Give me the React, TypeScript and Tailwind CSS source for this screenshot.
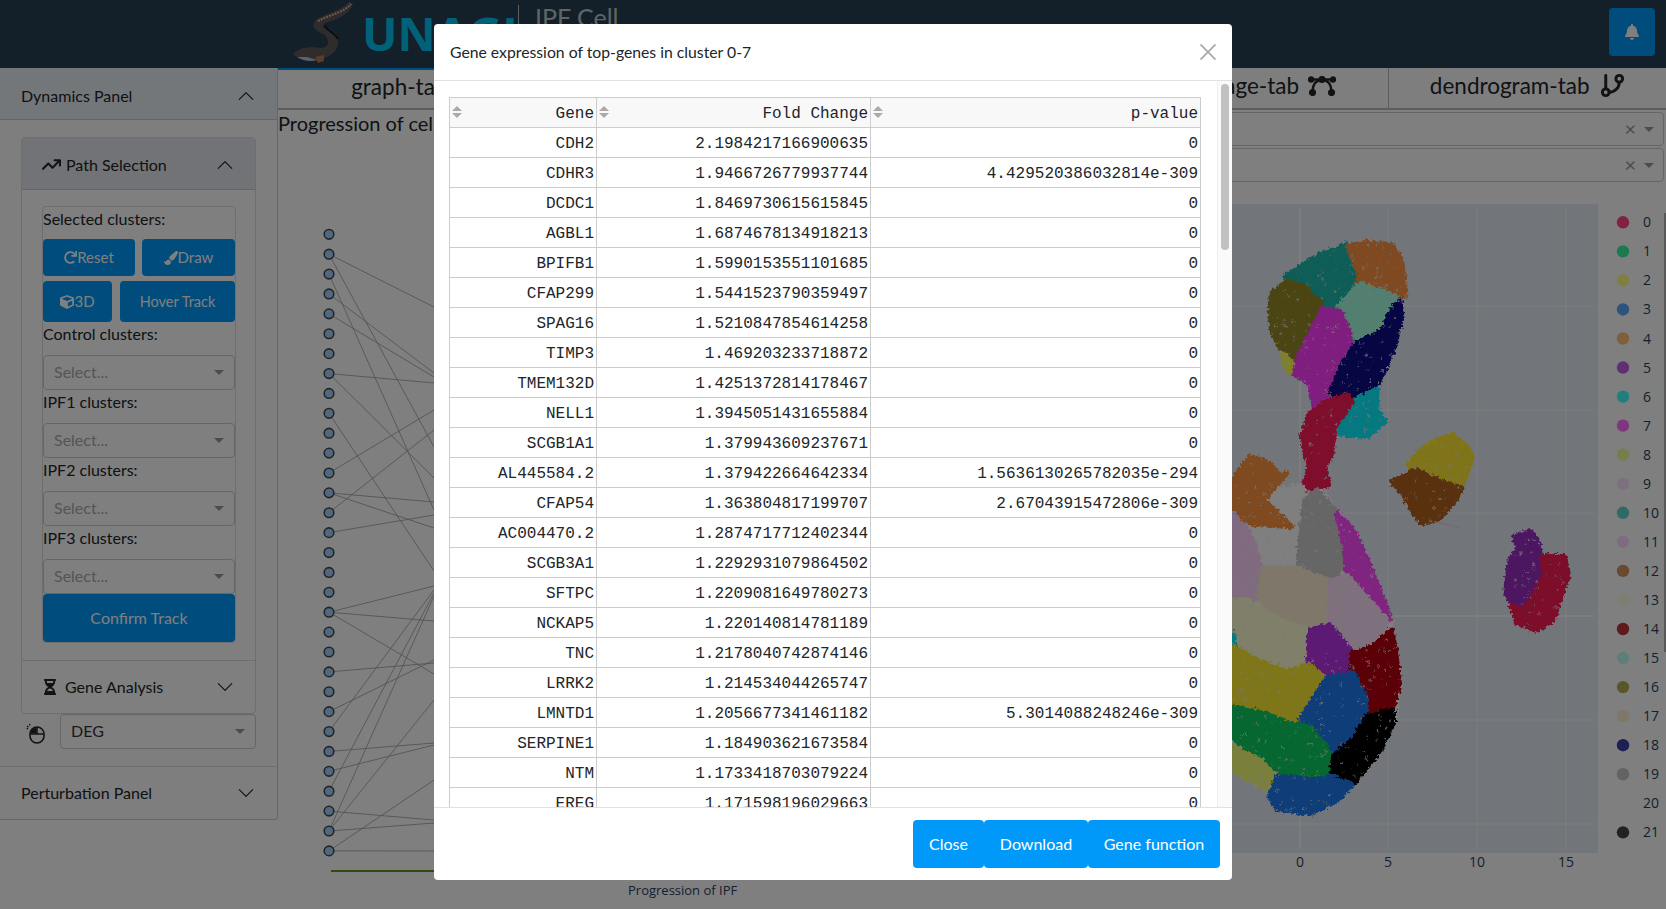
import { BsChevronDown, BsChevronUp } from "react-icons/bs";
import { FaBell, FaCube, FaHourglassHalf, FaPaintBrush, FaProjectDiagram, FaRedo } from "react-icons/fa";
import { FaArrowTrendUp } from "react-icons/fa6";
import { GitBranch } from "lucide-react";

const rows = [
	["CDH2", "2.1984217166900635", "0"],
	["CDHR3", "1.9466726779937744", "4.429520386032814e-309"],
	["DCDC1", "1.8469730615615845", "0"],
	["AGBL1", "1.6874678134918213", "0"],
	["BPIFB1", "1.5990153551101685", "0"],
	["CFAP299", "1.5441523790359497", "0"],
	["SPAG16", "1.5210847854614258", "0"],
	["TIMP3", "1.469203233718872", "0"],
	["TMEM132D", "1.4251372814178467", "0"],
	["NELL1", "1.3945051431655884", "0"],
	["SCGB1A1", "1.379943609237671", "0"],
	["AL445584.2", "1.379422664642334", "1.5636130265782035e-294"],
	["CFAP54", "1.363804817199707", "2.67043915472806e-309"],
	["AC004470.2", "1.2874717712402344", "0"],
	["SCGB3A1", "1.2292931079864502", "0"],
	["SFTPC", "1.2209081649780273", "0"],
	["NCKAP5", "1.220140814781189", "0"],
	["TNC", "1.2178040742874146", "0"],
	["LRRK2", "1.214534044265747", "0"],
	["LMNTD1", "1.2056677341461182", "5.3014088248246e-309"],
	["SERPINE1", "1.184903621673584", "0"],
	["NTM", "1.1733418703079224", "0"],
	["EREG", "1.171598196029663", "0"],
];

// the whole page sits under a 50% backdrop, so colours read off the picture get doubled
const x2 = (hex: string) => {
	const n = parseInt(hex.slice(1), 16);
	const c = [(n >> 16) & 255, (n >> 8) & 255, n & 255].map((v) => Math.min(255, v * 2));
	return `rgb(${c[0]},${c[1]},${c[2]})`;
};

const legend = [
	"#8f2340", "#1e7a4e", "#8d8340", "#2f5388", "#96603a", "#5e2f72", "#1f8794", "#8a3585",
	"#76904b", "#96707d", "#2f6a64", "#7f6c8e", "#6a4a2e", "#8a8a70", "#5e1a1f", "#5e9078",
	"#5a562a", "#8f7868", "#1c2052", "#636363", "", "#222222",
];

// cluster outlines, traced in 3x units from x=1220
const clusters: [string, number[]][] = [
	["#808080", [37,1500,230,1460,300,1465,345,1530,510,1855,535,2060,520,2170,395,2355,270,2440,37,2310]],
	["#0f5e57", [195,830,250,795,300,765,380,735,395,760,418,820,400,860,355,920,320,930,300,900,250,860]],
	["#8c4a22", [385,738,440,728,515,735,545,780,555,890,530,890,415,850,418,820,395,770]],
	["#4a4514", [155,880,200,845,250,860,305,910,270,1000,240,1060,210,1085,180,1040,155,990,150,930]],
	["#528770", [420,850,530,890,505,950,490,990,400,1035,375,960,355,920]],
	["#8a1f7e", [310,925,360,935,390,1000,395,1040,375,1080,335,1160,320,1195,285,1230,270,1150,220,1120,240,1060,270,1000]],
	["#05788c", [470,1150,470,1230,495,1262,440,1310,360,1300,365,1240,380,1190]],
	["#050545", [540,905,545,950,525,1030,490,1120,470,1150,390,1190,330,1180,350,1130,375,1080,410,1030,490,990,515,930]],
	["#8f0f2d", [380,1185,395,1205,345,1280,335,1360,315,1400,325,1455,245,1470,270,1400,255,1350,245,1310,270,1240,330,1200]],
	["#8a8a30", [190,1060,215,1085,210,1115,195,1100]],
	["#92741a", [610,1345,650,1320,700,1305,745,1345,755,1375,725,1465,640,1440,570,1410,565,1395]],
	["#5a320f", [515,1445,590,1410,640,1435,725,1465,700,1510,650,1560,605,1570,570,1520,550,1480]],
	["#8a8a8a", [60,1550,170,1470,250,1460,245,1620,235,1700,130,1700,100,1620]],
	["#8a4a20", [37,1440,90,1370,150,1390,180,1430,200,1420,130,1500,215,1580,100,1570,37,1550]],
	["#666666", [290,1470,345,1530,380,1680,330,1745,235,1700,245,1580,255,1500]],
	["#8a2585", [350,1540,400,1590,450,1700,510,1855,430,1790,380,1730,375,1640]],
	["#8a6a9a", [37,1540,90,1600,130,1720,115,1790,37,1820]],
	["#96786a", [130,1705,235,1705,330,1745,330,1860,260,1890,180,1860,115,1790]],
	["#96707d", [330,1745,380,1725,500,1860,490,1900,400,1950,370,1920,330,1880]],
	["#8a8a6a", [37,1800,80,1800,180,1860,265,1890,270,1990,200,2015,120,1980,37,1950]],
	["#5d1a75", [270,1890,330,1875,390,1950,395,2020,360,2035,290,2030,265,1990]],
	["#05788c", [37,1900,50,1960,37,1975]],
	["#5a0008", [460,1940,515,1890,530,1980,535,2060,520,2120,480,2165,440,2150,425,2060,395,2020,395,1960]],
	["#94761a", [37,1940,120,1985,200,2015,265,1995,320,2035,250,2150,205,2170,130,2130,37,2110]],
	["#0f3d78", [320,2035,400,2020,440,2100,435,2160,400,2230,350,2270,240,2160]],
	["#056830", [37,2120,130,2140,205,2170,270,2180,320,2240,345,2330,290,2340,165,2330,120,2280,37,2210]],
	["#000000", [440,2150,520,2130,520,2170,480,2250,400,2350,335,2330,340,2270,400,2220]],
	["#7a9a3c", [37,2240,120,2280,170,2330,170,2380,130,2360,37,2310]],
	["#0f3d78", [170,2330,290,2340,335,2330,395,2355,350,2400,270,2440,170,2425,150,2390]],
	["#4c1760", [885,1610,930,1595,950,1620,960,1660,975,1720,915,1830,875,1815,858,1770,870,1680,895,1650]],
	["#7d0e2a", [965,1670,1035,1670,1042,1730,1000,1860,950,1890,890,1870,875,1815,915,1830,975,1720]],
];

const inside = (p: number[], x: number, y: number) => {
	let hit = false;
	for (let i = 0, j = p.length - 2; i < p.length; j = i, i += 2) {
		if (p[i + 1] > y !== p[j + 1] > y && x < ((p[j] - p[i]) * (y - p[i + 1])) / (p[j + 1] - p[i + 1]) + p[i]) hit = !hit;
	}
	return hit;
};

// gray flecks where the scatter leaves gaps
const flecks: [number, number][] = [];
let seed = 17;
const rnd = () => {
	seed = (seed * 16807) % 2147483647;
	return seed / 2147483647;
};
clusters.slice(1).forEach(([, p]) => {
	for (let k = 0; k < 2000; k++) {
		const x = 37 + rnd() * 1010;
		const y = 720 + rnd() * 1730;
		if (inside(p, x, y)) flecks.push([x, y]);
	}
});

const nodes = Array.from({ length: 32 }, (_, i) => 234.3 + i * 19.89);
const edges = [
	[1,307],[1,447],[2,510],[3,373],[4,377],[7,383],[7,478],[9,571],[12,410],[13,502],[13,528],[14,430],[15,515],
	[19,586],[19,621],[19,674],[22,663],[24,660],[25,590],[26,743],[27,745],[28,593],[29,820],[30,823],[30,596],[30,700],[31,780],[31,851],
];

const ClusterSelect = ({ label }: { label: string }) => (
	<>
		<div className="h-[33px] leading-[24px] text-[#212529]">{label}</div>
		<SelectBox text="Select..." muted />
	</>
);

const SelectBox = ({ text, muted, className = "" }: { text: string; muted?: boolean; className?: string }) => (
	<div className={`flex h-[35px] items-center justify-between rounded border border-[#ccc] bg-white pb-[2px] pl-[10px] pr-[10px] ${className}`}>
		<span className={muted ? "text-[#aaa]" : "text-[#333]"}>{text}</span>
		<span className="mt-[2px] h-0 w-0 border-x-[5px] border-t-[5px] border-x-transparent border-t-[#999]" />
	</div>
);

const Blue = ({ children, className = "" }: { children: React.ReactNode; className?: string }) => (
	<button className={`flex items-center justify-center rounded bg-[#0099fa] text-white ${className}`}>{children}</button>
);

const Tab = ({ label, icon, active, divider, className = "" }: { label?: string; icon?: React.ReactNode; active?: boolean; divider?: boolean; className?: string }) => (
	<div className={`flex items-center justify-center gap-[9px] pb-[5px] text-[22.5px] text-[#212529] ${active ? "border-t-2 border-[#0099fa]" : ""} ${divider ? "border-l border-[#bbb]" : ""} ${className}`}>
		{label}
		{icon}
	</div>
);

const TopFilter = () => (
	<div className="flex h-[34px] items-center justify-end gap-[8px] rounded border border-[#ccc] bg-white pr-[9px]">
		<span className="-mt-[2px] text-[20px] leading-none text-[#999]">×</span>
		<span className="h-0 w-0 border-x-[5px] border-t-[5px] border-x-transparent border-t-[#999]" />
	</div>
);

const BezierIcon = () => (
	<svg width="28" height="20" viewBox="0 0 28 20" fill="none" stroke="#212529" strokeWidth="2.4">
		<path d="M2 3.5 H26" />
		<path d="M14 3.5 C8 4 5 9 4.5 15 M14 3.5 C20 4 23 9 23.5 15" />
		<circle cx="3" cy="3.5" r="2" fill="#212529" />
		<circle cx="25" cy="3.5" r="2" fill="#212529" />
		<circle cx="14" cy="3.5" r="2.4" fill="#212529" />
		<circle cx="4.5" cy="16.5" r="2.4" fill="#212529" />
		<circle cx="23.5" cy="16.5" r="2.4" fill="#212529" />
	</svg>
);

const EelLogo = () => (
	<svg width="62" height="62" viewBox="0 0 62 62" className="mt-[1px] shrink-0">
		<path d="M0 53 C8 45 20 46 28 47 C36 46 37 40 32 34 C24 30 16 26 24 18 C34 12 48 10 56 1 L60 3 C56 14 44 18 32 22 C28 25 30 27 38 30 C48 36 48 48 36 55 C26 60 10 62 0 53 Z" fill="#5e585c" />
		<path d="M25 20 C36 14 50 12 58 3" fill="none" stroke="#d8b488" strokeWidth="2" strokeDasharray="2 1" />
		<path d="M33 24 C30 28 40 30 45 38" fill="none" stroke="#1c1a1c" strokeWidth="2" />
		<path d="M4 56 C10 60 18 61 24 59 L14 56 Z" fill="#b8c4cc" />
		<path d="M22 56 L31 54 L31 60 L25 62 Z" fill="#b87848" />
	</svg>
);

const App = () => {
	return (
		<div className="relative h-[909px] w-full overflow-hidden bg-white font-['Lato',sans-serif] text-base">
			{/* header */}
			<div className="flex h-[68px] items-start justify-between bg-[#264054] pl-[293px] pr-[11px]">
				<div className="flex items-start">
					<EelLogo />
					<span className="ml-[7px] mt-[4px] w-[156px] font-['Open_Sans',sans-serif] text-[47px] leading-[58px] font-bold text-[#00c4f0]">UNAGI</span>
					<div className="mt-[5px] flex h-5 border-l border-[#bbb] pl-[16px] text-[25px] leading-[24px] text-[#c0c8cc]">IPF Cell</div>
				</div>
				<button className="mt-2 flex h-12 w-[46px] items-center justify-center rounded bg-[#0099fa] text-white">
					<FaBell size={16} />
				</button>
			</div>

			<div className="flex">
				{/* side panel */}
				<div className="h-[750px] w-[278px] shrink-0">
					<div className="rounded-br border-r border-b border-[#ccc] bg-[#fcfcfc] text-[#212529]">
						<div className="flex h-[52px] items-center justify-between border-b border-[#ccc] bg-[#e9eef4] pl-[21px] pr-[22px] pt-[4px]">
							<span>Dynamics Panel</span>
							<BsChevronUp size={18} />
						</div>
						<div className="px-[21px] pt-[17px]">
							<div className="rounded border border-[#ddd] bg-white">
								<div className="flex h-[52px] items-center justify-between border-b border-[#ccc] bg-[#e3e7ec] pl-5 pr-[21px] pt-[2px]">
									<span className="flex items-center gap-[5px]">
										<FaArrowTrendUp size={19} />
										Path Selection
									</span>
									<BsChevronUp size={18} />
								</div>
								<div className="pb-[17px] pl-[20px] pr-[19px] pt-[16px]">
									<div className="rounded border border-[#ddd] text-[#212529]">
										<div className="h-[32px] leading-[24px]">Selected clusters:</div>
										<div className="flex gap-[7px]">
											<Blue className="h-[37px] w-[92px] text-[15px]"><FaRedo size={13} />Reset</Blue>
											<Blue className="h-[37px] w-[93px] text-[15px]"><FaPaintBrush size={14} />Draw</Blue>
										</div>
										<div className="mt-[5px] flex gap-2">
											<Blue className="h-[41px] w-[69px] text-[15px]"><FaCube size={14} />3D</Blue>
											<Blue className="h-[41px] w-[115px] text-[14.5px]">Hover Track</Blue>
										</div>
										<ClusterSelect label="Control clusters:" />
										<ClusterSelect label="IPF1 clusters:" />
										<ClusterSelect label="IPF2 clusters:" />
										<ClusterSelect label="IPF3 clusters:" />
										<Blue className="h-[48px] w-full text-base">Confirm Track</Blue>
									</div>
								</div>
								<div className="flex h-[53px] items-center justify-between border-t border-[#ddd] pl-5 pr-[21px]">
									<span className="flex items-center gap-[7px]">
										<FaHourglassHalf size={16} />
										Gene Analysis
									</span>
									<BsChevronDown size={18} />
								</div>
							</div>
							<div className="flex items-center pb-[17px]">
								<svg width="20" height="21" viewBox="0 0 20 21" className="ml-[5px] mr-[14px] mt-[3px]" fill="none" stroke="#212529" strokeWidth="1.6">
									<rect x="4" y="4" width="14" height="16" rx="7" />
									<path d="M4 11 H18 M11 4 V11" />
									<path d="M4.6 10.4 V9 A6.4 6.4 0 0 1 10.4 4.6 V10.4 Z" fill="#212529" stroke="none" />
									<path d="M1 3 L2.4 4.2 M3.4 1 L4.2 2.6 M0.6 5.6 H2.2" strokeWidth="1.2" />
								</svg>
								<SelectBox text="DEG" className="flex-1" />
							</div>
						</div>
						<div className="flex h-[53px] items-center justify-between border-t border-[#ddd] pl-[21px] pr-[22px]">
							<span>Perturbation Panel</span>
							<BsChevronDown size={18} />
						</div>
					</div>
				</div>

				{/* tabs and plots */}
				<div className="flex min-w-0 flex-1 flex-col">
					<div className="grid h-[42px] grid-cols-5 border-b-2 border-[#bbb] bg-[#fcfcfc]">
						<Tab label="graph-tab" icon={<FaProjectDiagram size={26} />} active />
						<Tab />
						<Tab />
						<Tab label="lineage-tab" icon={<BezierIcon />} className="pl-[26px]" />
						<Tab label="dendrogram-tab" icon={<GitBranch size={27} strokeWidth={2.6} />} divider />
					</div>
					<div className="flex">
						<div className="w-[650px] shrink-0">
							<div className="h-[30px] text-[20px] leading-[26px] text-[#212529]">Progression of cell</div>
							<svg width="650" height="769" viewBox="278 140 650 769" className="block">
								{edges.map(([i, y]) => (
									<line key={`${i}-${y}`} x1={329} y1={nodes[i]} x2={434} y2={y} stroke="#a8a8a8" strokeWidth="0.9" />
								))}
								{nodes.map((y) => (
									<circle key={y} cx={329} cy={y} r={4.8} fill="#a2d0ff" stroke="#444a50" strokeWidth="1.6" />
								))}
								<line x1={331} y1={871} x2={434} y2={871} stroke="#5a9a20" strokeWidth="2" />
								<text x={628} y={895} fontSize="13" fontFamily="Open Sans, sans-serif" fill="#2a3f5f">Progression of IPF</text>
							</svg>
						</div>
						<div className="min-w-0 flex-1">
							<div className="flex flex-col gap-[2px] pr-[2px] pt-[2px]">
								<TopFilter />
								<TopFilter />
							</div>
							<svg width="738" height="705" viewBox="928 204 738 705" className="mt-[22px] block">
								<defs>
									<filter id="rough" x="1220" y="200" width="446" height="700" filterUnits="userSpaceOnUse" primitiveUnits="userSpaceOnUse">
										<feTurbulence type="fractalNoise" baseFrequency="0.35" numOctaves="2" seed="4" result="n" />
										<feDisplacementMap in="SourceGraphic" in2="n" scale="7" xChannelSelector="R" yChannelSelector="G" />
									</filter>
								</defs>
								<rect x={928} y={204} width={670} height={649} fill="#e5ecf6" />
								{[1300, 1388, 1477, 1566].map((x) => (
									<line key={x} x1={x} y1={208} x2={x} y2={849} stroke="#fff" strokeWidth={x === 1300 ? 2 : 1} opacity="0.7" />
								))}
								{[306, 410, 513, 616, 720, 824].map((y) => (
									<line key={y} x1={928} y1={y} x2={1594} y2={y} stroke="#fff" strokeWidth={y === 616 ? 2 : 1} opacity="0.7" />
								))}
								<g filter="url(#rough)">
									<g transform="translate(1220 0) scale(0.33333)">
										{clusters.map(([c, p], i) => (
											<polygon key={i} points={p.join(" ")} fill={x2(c)} stroke={x2(c)} strokeWidth="16" strokeLinejoin="round" />
										))}
										<line x1={650} y1={1565} x2={720} y2={1585} stroke={x2("#8a6070")} strokeWidth="4" />
										{flecks.map(([x, y], i) => (
											<rect key={i} x={x} y={y} width={3 + (i % 3) * 2} height={3 + (i % 2) * 3} fill="#f0f0f0" opacity="0.7" />
										))}
									</g>
								</g>
								{[["0", 1300], ["5", 1388], ["10", 1477], ["15", 1566]].map(([t, x]) => (
									<text key={t} x={x} y={867} textAnchor="middle" fontSize="14" fontFamily="Open Sans, sans-serif" fill="#2a3f5f">{t}</text>
								))}
								{legend.map((c, i) => (
									<g key={i}>
										{c && <circle cx={1623} cy={222.3 + i * 29.05} r={6.2} fill={x2(c)} />}
										<text x={1643} y={227.3 + i * 29.05} fontSize="14" fontFamily="Open Sans, sans-serif" fill="#2a3f5f">{i}</text>
									</g>
								))}
								<line x1={1665} y1={213} x2={1665} y2={652} stroke="#999" strokeWidth="1.5" />
							</svg>
						</div>
					</div>
				</div>
			</div>

			{/* modal */}
			<div className="absolute inset-0 bg-black/50 pt-6">
				<div className="mx-auto flex h-[856px] w-[798px] flex-col overflow-hidden rounded bg-white">
					<div className="flex h-[57px] shrink-0 items-center justify-between border-b border-[#dee2e6] pl-[16px] pr-[16px]">
						<span className="text-[15.75px] text-[#212529]">Gene expression of top-genes in cluster 0-7</span>
						<svg width="16" height="16" viewBox="0 0 16 16" stroke="#aaa" strokeWidth="1.8">
							<path d="M0.5 0.5 L15.5 15.5 M15.5 0.5 L0.5 15.5" />
						</svg>
					</div>
					<div className="flex min-h-0 flex-1">
						<div className="min-w-0 flex-1 overflow-hidden pl-[15px] pt-[16px]">
							<table className="w-[751px] table-fixed border-collapse font-['Liberation_Mono',monospace] text-base text-[#212529]">
								<colgroup>
									<col className="w-[147px]" />
									<col className="w-[274px]" />
									<col className="w-[330px]" />
								</colgroup>
								<thead>
									<tr className="h-[30px] bg-[#f8f8f8]">
										{["Gene", "Fold Change", "p-value"].map((h) => (
											<th key={h} className="border border-[#ccc] pl-[2px] pr-[2px] pt-[2px] font-normal">
												<div className="flex items-center justify-between">
													<span className="-mt-1 flex flex-col gap-[2px]">
														<span className="h-0 w-0 border-x-[5px] border-b-[5px] border-x-transparent border-b-[#aaa]" />
														<span className="h-0 w-0 border-x-[5px] border-t-[5px] border-x-transparent border-t-[#aaa]" />
													</span>
													{h}
												</div>
											</th>
										))}
									</tr>
								</thead>
								<tbody>
									{rows.map((r) => (
										<tr key={r[0]} className="h-[30px]">
											{r.map((v, i) => (
												<td key={i} className="border border-[#ccc] pr-[2px] pt-[2px] text-right">{v}</td>
											))}
										</tr>
									))}
								</tbody>
							</table>
						</div>
						<div className="w-[15px] shrink-0 border-l border-[#eee] bg-[#fafafa] px-[3px] pt-[3px]">
							<div className="h-[166px] rounded-full bg-[#c1c1c1]" />
						</div>
					</div>
					<div className="flex h-[73px] shrink-0 items-start justify-end border-t border-[#dee2e6] pr-3 pt-3">
						<Blue className="h-12 w-[71px] text-base">Close</Blue>
						<Blue className="h-12 w-[104px] text-base">Download</Blue>
						<Blue className="h-12 w-[132px] text-base">Gene function</Blue>
					</div>
				</div>
			</div>
		</div>
	);
};

export default App;
